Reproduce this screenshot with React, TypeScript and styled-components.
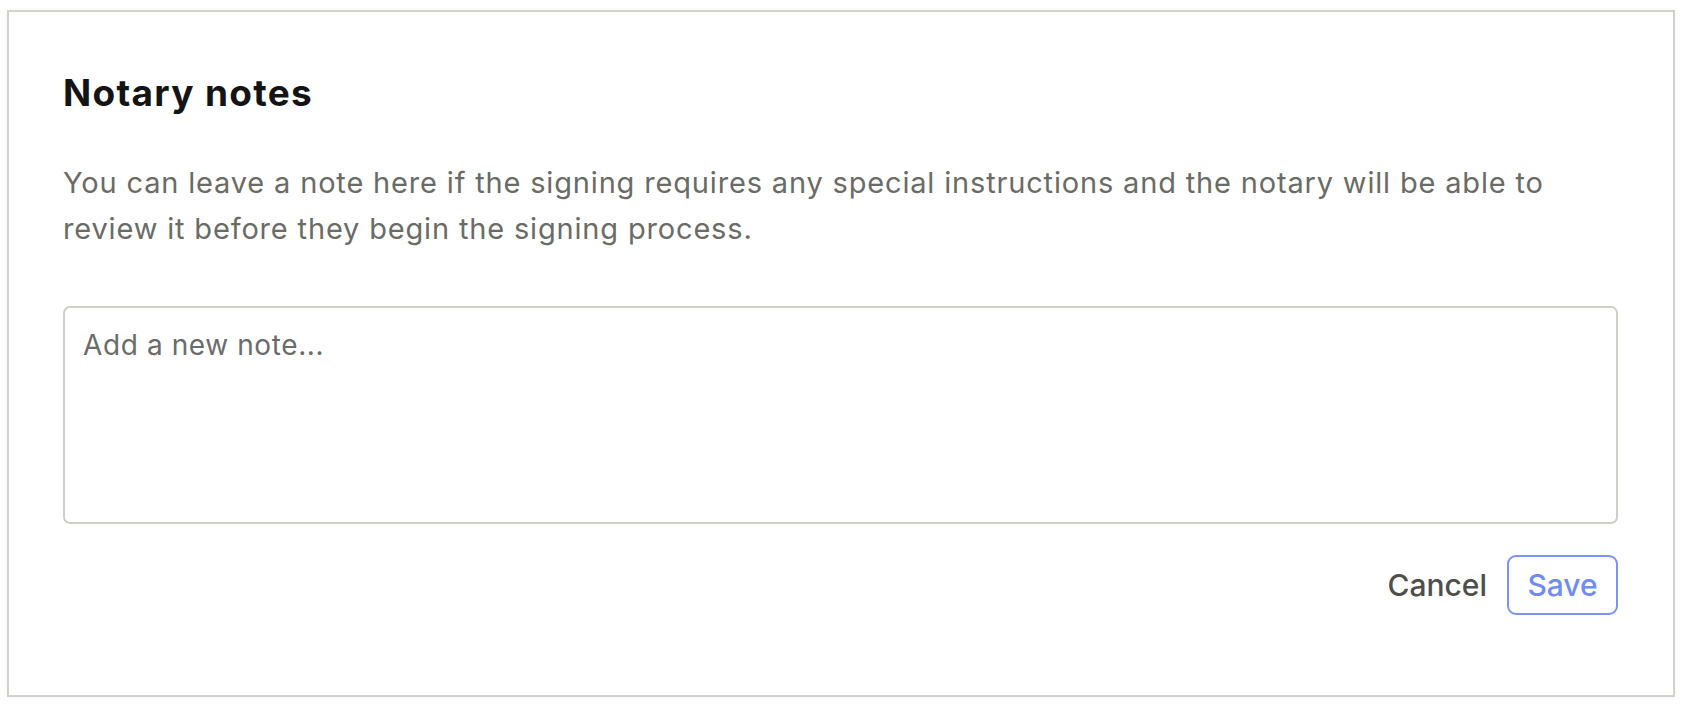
import React, { useState } from "react";
import styled, { createGlobalStyle } from "styled-components";

const GlobalStyle = createGlobalStyle`
	* {
		box-sizing: border-box;
	}
	body {
		margin: 0;
		background: #ffffff;
		font-family: Inter, "Noto Sans", sans-serif;
	}
`;

function NotaryNotes() {
	const [note, setNote] = useState("");

	return (
		<Card>
			<Title>Notary notes</Title>
			<Description>
				You can leave a note here if the signing requires any special
				instructions and the notary will be able to review it before they
				begin the signing process.
			</Description>
			<NoteInput
				placeholder="Add a new note..."
				value={note}
				onChange={(e) => setNote(e.target.value)}
			/>
			<Actions>
				<CancelButton onClick={() => setNote("")}>Cancel</CancelButton>
				<SaveButton>Save</SaveButton>
			</Actions>
		</Card>
	);
}

export default function App() {
	return (
		<>
			<GlobalStyle />
			<NotaryNotes />
		</>
	);
}

const Card = styled.section`
	margin: 10px 7px 5px 7px;
	border: 2px solid #d2d2cc;
	box-shadow: 0 0 4px rgba(0, 0, 0, 0.06);
	background: #ffffff;
	padding: 59px 55px 80px 54px;
	display: flex;
	flex-direction: column;
`;

const Title = styled.h1`
	margin: 0;
	font-size: 37px;
	line-height: 44px;
	font-weight: 700;
	letter-spacing: 1.3px;
	color: #141414;
`;

const Description = styled.p`
	margin: 45px 0 0 0;
	font-size: 29px;
	line-height: 46px;
	font-weight: 400;
	letter-spacing: 0.83px;
	color: #6b6b66;
`;

const NoteInput = styled.textarea`
	margin-top: 54px;
	width: 100%;
	height: 218px;
	resize: none;
	border: 2px solid #cfcfc8;
	border-radius: 7px;
	padding: 16px 18px;
	font-family: Inter, "Noto Sans", sans-serif;
	font-size: 28px;
	line-height: 42px;
	letter-spacing: 0.6px;
	color: #2a2a2a;
	outline: none;

	&::placeholder {
		color: #6b6b6b;
	}
`;

const Actions = styled.div`
	margin-top: 31px;
	display: flex;
	justify-content: flex-end;
	align-items: center;
	gap: 20px;
`;

const CancelButton = styled.button`
	border: none;
	background: none;
	padding: 0;
	font-family: Inter, "Noto Sans", sans-serif;
	font-size: 30px;
	font-weight: 500;
	color: #4f4f4a;
	cursor: pointer;
`;

const SaveButton = styled.button`
	height: 60px;
	width: 111px;
	border: 2px solid #7b93f5;
	border-radius: 9px;
	background: #ffffff;
	font-family: Inter, "Noto Sans", sans-serif;
	font-size: 30px;
	font-weight: 500;
	color: #6f8cf5;
	cursor: pointer;
`;
